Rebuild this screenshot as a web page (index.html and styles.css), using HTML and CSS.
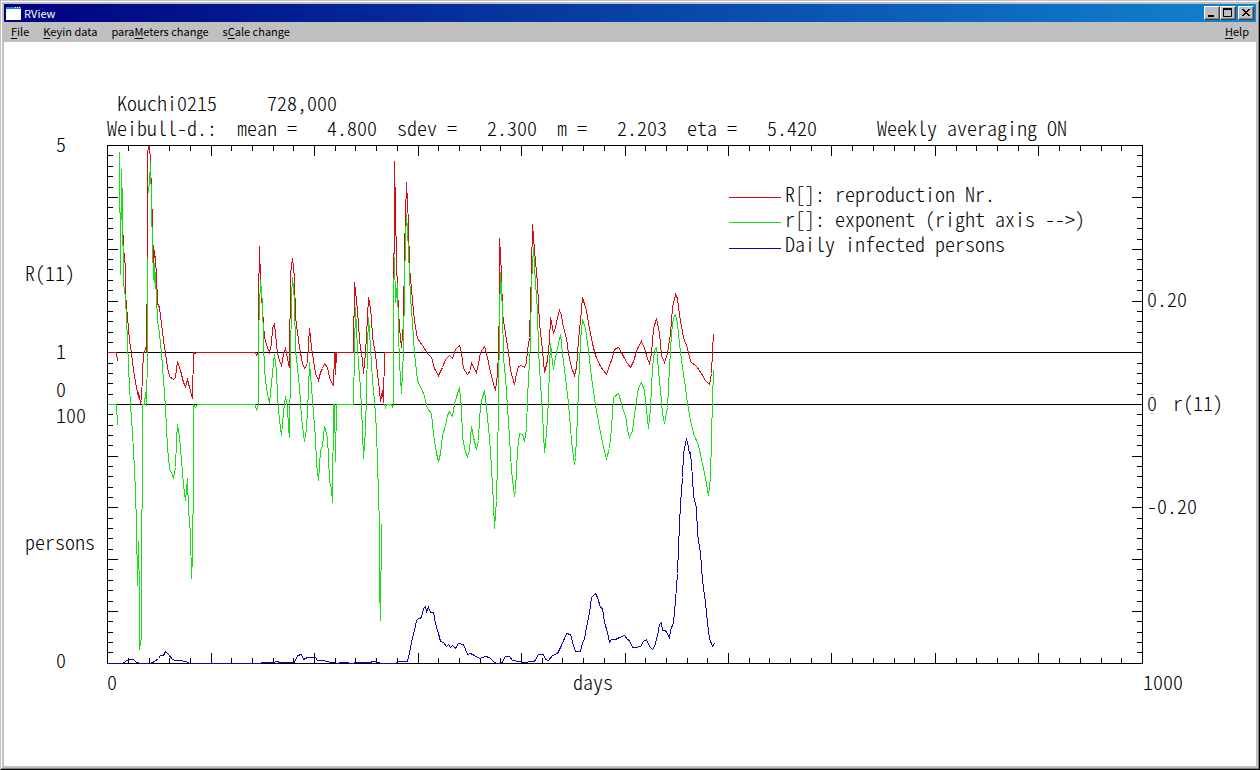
FILE: index.html
```html
<!DOCTYPE html>
<html lang="en">
<head>
<meta charset="utf-8">
<title>RView</title>
<link rel="stylesheet" href="styles.css">
</head>
<body>
<div class="window">
<div class="frame">
  <header class="titlebar">
    <svg class="app-icon" width="15" height="13" viewBox="0 0 15 13" aria-hidden="true">
      <rect width="15" height="13" fill="#fff"/>
      <rect width="15" height="2" fill="#1084d0"/>
      <path d="M9 .5h1M11 .5h1M13 .5h1" stroke="#fff"/>
    </svg>
    <h1 class="title">RView</h1>
    <div class="controls">
      <button class="control" type="button" aria-label="Minimize"><svg width="12" height="10" viewBox="0 0 12 10"><path d="M2 8h6" stroke="#000" stroke-width="2"/></svg></button>
      <button class="control" type="button" aria-label="Maximize"><svg width="12" height="10" viewBox="0 0 12 10"><path d="M1.500 1v7.500h8V1" fill="none" stroke="#000"/><path d="M1 1h9" stroke="#000" stroke-width="2"/></svg></button>
      <button class="control control-close" type="button" aria-label="Close"><svg width="12" height="10" viewBox="0 0 12 10"><path d="M2 1h2v1h1v1h2V2h1V1h2v1H9v1H8v1H7v1h1v1h1v1h1v1H8V7H7V6H5v1H4v1H2V7h1V6h1V5h1V4H4V3H3V2H2z"/></svg></button>
    </div>
  </header>
  <nav class="menubar">
    <button class="menu" type="button"><u>F</u>ile</button>
    <button class="menu" type="button"><u>K</u>eyin data</button>
    <button class="menu" type="button">para<u>M</u>eters change</button>
    <button class="menu" type="button">s<u>C</u>ale change</button>
    <button class="menu menu-help" type="button"><u>H</u>elp</button>
  </nav>
  <main class="canvas">
    <svg class="chart" viewBox="4 42 1252 724" role="img" aria-label="Reproduction number, exponent and daily infected persons">
      <defs>
        <path id="xticks" d="M128 146v4M149 146v4M169 146v4M190 146v4M211 146v9M231 146v4M252 146v4M273 146v4M293 146v4M314 146v9M335 146v4M355 146v4M376 146v4M397 146v4M418 146v9M438 146v4M459 146v4M480 146v4M500 146v4M521 146v9M542 146v4M562 146v4M583 146v4M604 146v4M625 146v9M645 146v4M666 146v4M687 146v4M707 146v4M728 146v9M749 146v4M769 146v4M790 146v4M811 146v4M831 146v9M852 146v4M873 146v4M894 146v4M914 146v4M935 146v9M956 146v4M976 146v4M997 146v4M1018 146v4M1038 146v9M1059 146v4M1080 146v4M1101 146v4M1121 146v4"/>
        <path id="yticks" d="M108 155h4M108 166h4M108 176h4M108 187h4M108 197h9M108 207h4M108 218h4M108 228h4M108 239h4M108 249h9M108 259h4M108 269h4M108 280h4M108 290h4M108 301h9M108 311h4M108 321h4M108 332h4M108 342h4M108 352h9M108 363h4M108 373h4M108 383h4M108 394h4M108 404h9M108 414h4M108 425h4M108 435h4M108 445h4M108 456h9M108 466h4M108 476h4M108 487h4M108 497h4M108 507h9M108 518h4M108 528h4M108 538h4M108 549h4M108 559h9M108 569h4M108 580h4M108 590h4M108 601h4M108 611h9M108 621h4M108 632h4M108 642h4M108 652h4"/>
      </defs>

      <g class="axes" transform="translate(.5 .5)">
        <use href="#xticks"/>
        <use href="#xticks" transform="translate(0 808) scale(1 -1)"/>
        <use href="#yticks"/>
        <use href="#yticks" transform="translate(1249 0) scale(-1 1)"/>
        <path d="M107 145H1142V663H107zM107 352H1142M107 404H1142"/>
      </g>

      <g class="series" transform="translate(.5 .5)">
        <path class="reproduction" d="M107 352H116L117 361M121 212L122 221 123 247 125 267 125 293 127 317 129 340 131 353 133 370 136 387 138 397 138 392 140 402 141 400 142 373 143 352 144 352 145 347 146 352 147 257 147 153 148 146H149L150 160 151 193 152 223 153 265 154 250 156 273 157 303 159 307 161 323 163 340 165 353 167 367 169 376 173 379 175 377 177 361 180 370 183 382 185 386 187 379 189 387 192 398 193 352 195 353 196 352 255 352 256 355 258 352 258 300 259 246 260 280 262 310 264 337 267 347 269 352 271 343 272 328 274 323 275 333 277 353 279 360 281 365 283 354 285 348 286 353 288 363 289 367 290 273 292 258 294 277 295 317 297 332 299 347 302 363 304 368 307 363 308 343 309 328 311 347 313 360 315 373 318 380 320 372 322 368 324 363 327 367 329 377 331 382 333 385 334 353 335 352 335 374 336 352 353 352 354 282 356 300 358 323 359 340 362 360 363 373 365 353 367 317 368 297 369 302 371 317 372 337 375 353 377 373 379 390 380 401 382 390 383 402 384 352 393 352 394 161 395 210 396 260 397 290 399 327 401 347 403 323 404 250 405 217 406 182 408 223 409 267 412 300 414 320 417 338 422 345 427 353 431 357 434 368 438 375 442 367 445 359 449 355 452 358 455 349 459 345 461 352 463 368 467 374 470 370 471 362 473 367 476 372 478 363 480 352 484 346 487 357 489 367 492 380 495 390 497 373 498 353 499 300 499 238 501 273 502 313 505 333 508 352 510 370 514 384 516 373 518 366 521 365 524 367 526 362 527 350 529 337 531 270 532 224 534 250 537 283 539 323 542 350 544 372 547 360 549 340 550 317 552 327 553 333 555 327 557 317 559 310 561 315 563 327 566 338 568 353 571 367 574 375 576 367 578 340 580 320 582 297 586 310 589 328 592 343 595 355 600 366 606 374 609 365 612 357 614 349 618 347 621 352 624 358 627 363 630 367 633 361 637 348 641 341 644 348 647 358 649 363 651 353 653 328 656 318 659 333 661 355 664 362 667 353 670 333 672 307 675 294 677 298 679 315 683 337 687 348 690 361 696 366 701 373 705 380 709 384 711 373 712 350 713 334"/>
        <path class="exponent" d="M107 404H116L117 425M119 151V212H120L120 274 121 169 122 204 123 283 125 297 127 340 128 367 130 404 132 433 134 468 135 493 136 523 137 585 138 541 139 597 139 649 141 637 141 510 142 507 142 404 144 404 145 392 146 405 147 353 147 257M148 193L150 165 150 162 152 247 153 277 154 282 154 263 156 297 157 320 159 333 161 353 163 380 165 407 167 447 169 468 173 477 175 467 176 440 177 424 179 437 181 460 183 485 185 500 187 478 188 510 190 533 191 578 192 557 193 473 193 404 195 407 197 404 255 404 256 410 258 404 258 333 260 280 262 303 263 340 264 370 266 388 269 403 271 383 273 362 274 354 276 370 277 397 279 420 281 435 283 412 285 396 287 407 288 427 289 437 290 363 291 297 292 277 294 300 295 350 297 367 299 387 301 417 304 441 306 428 308 390 309 362 311 387 313 413 315 437 316 463 318 480 320 450 322 445 324 426 327 437 328 457 329 480 331 488 332 502 333 404 334 404 335 461 336 404 353 404 354 350 355 307 356 330 358 363 360 387 362 430 363 458 365 430 366 393 367 347 368 317 370 347 372 380 374 400 376 430 377 463 378 493 379 527 379 585 380 620 381 524M384 404L385 407 386 404 391 404 392 406 393 404 393 300 394 257 395 302 397 283 398 330 399 363 401 393 403 350 404 283 405 240 406 213 408 250 410 297 412 323 414 353 417 380 423 393 427 408 431 413 433 433 436 453 438 461 440 453 442 435 445 425 447 415 449 411 452 416 454 403 459 387 461 408 462 437 465 452 467 456 469 450 471 426 473 437 476 449 478 440 479 417 481 400 484 390 486 407 487 417 489 437 491 467 493 503 494 528 496 500 497 460 498 405 499 317 500 272 502 310 503 357 505 377 507 407 509 437 511 470 514 496 515 490 517 450 519 433 522 434 524 441 526 428 527 397 530 343 531 283 533 247 535 283 537 310 538 350 540 383 542 413 544 452 546 433 548 400 549 367 550 343 552 362 553 369 555 357 558 343 560 334 562 353 565 377 568 403 571 440 574 464 575 457 577 417 578 387 580 340 582 319 585 328 588 350 591 377 595 405 599 427 603 447 606 458 609 448 611 427 613 397 618 393 621 403 626 420 627 430 629 437 632 430 635 407 638 387 641 382 644 390 646 410 648 428 650 407 652 367 654 350 656 347 658 370 660 390 662 413 664 423 667 407 669 367 671 333 673 317 675 314 677 323 679 343 682 367 685 387 687 403 690 420 693 433 698 445 703 468 705 478 708 495 710 477 711 437 712 400 713 370"/>
        <path class="infected" d="M107 663H122L125 661 128 659 133 659 136 662 140 663 150 663 154 661 158 658 160 655 163 655 165 651 168 654 172 659 175 660 180 660 185 661 190 663 260 663 262 662 273 662 276 661 280 662 294 662 297 655 301 654 303 659 307 657 315 657 317 660 323 660 330 662 338 663 340 662 347 662 349 663 358 662 368 662 374 661 378 662 380 663 396 663 397 661 407 661 408 657 410 647 412 637 414 630 416 620 418 618 419 618 421 617 423 608 425 606 426 611 428 607 430 612 433 612 435 623 438 633 440 641 443 642 446 646 448 644 450 647 452 645 455 648 458 643 463 644 467 654 470 653 474 655 479 658 485 656 489 657 493 661 496 663 501 663 505 656 509 656 512 660 518 661 525 662 530 661 534 661 538 654 543 654 545 659 548 660 552 655 557 653 561 645 566 633 570 634 573 645 575 651 580 651 582 643 584 638 587 622 589 612 591 597 593 595 595 593 597 597 600 607 602 608 604 622 607 632 609 642 611 639 615 639 619 637 624 635 627 639 629 640 632 647 635 647 640 646 643 641 646 639 649 646 652 649 654 646 657 635 659 624 661 622 662 630 665 630 669 637 670 630 673 622 675 600 677 573 678 547 680 503 682 477 683 453 686 438 688 447 689 453 690 452 692 477 693 495 696 508 697 533 700 553 702 580 705 602 707 622 709 638 712 646 714 643"/>
        <path class="reproduction" d="M728 197H780"/>
        <path class="exponent" d="M728 222H780"/>
        <path class="infected" d="M728 248H780"/>
      </g>

      <g class="labels">
        <text x="117" y="111">Kouchi0215     728,000</text>
        <text x="107" y="136">Weibull-d.:  mean =   4.800  sdev =   2.300  m =   2.203  eta =   5.420      Weekly averaging ON</text>
        <text x="785" y="202">R[]: reproduction Nr.</text>
        <text x="785" y="227">r[]: exponent (right axis --&gt;)</text>
        <text x="785" y="252">Daily infected persons</text>
        <text x="56" y="152">5</text>
        <text x="25" y="281">R(11)</text>
        <text x="56" y="359">1</text>
        <text x="56" y="397">0</text>
        <text x="56" y="423">100</text>
        <text x="25" y="550">persons</text>
        <text x="56" y="668">0</text>
        <text x="107" y="690">0</text>
        <text x="573" y="690">days</text>
        <text x="1143" y="690">1000</text>
        <text x="1147" y="307">0.20</text>
        <text x="1147" y="411">0</text>
        <text x="1173" y="411">r(11)</text>
        <text x="1147" y="514">-0.20</text>
      </g>
    </svg>
  </main>
</div>
</div>
</body>
</html>
```
FILE: styles.css
```css
* { box-sizing: border-box; }

body {
  margin: 0;
  background: #c0c0c0;
  color: #000;
  font: 11px/18px "Noto Sans CJK JP", "Liberation Sans", sans-serif;
}

.window {
  min-height: 100vh;
  display: flex;
  border: 1px solid;
  border-color: #c0c0c0 #000 #000 #c0c0c0;
}

.frame {
  flex: 1;
  min-width: 0;
  display: flex;
  flex-direction: column;
  padding: 2px;
  border: 1px solid;
  border-color: #fff #808080 #808080 #fff;
}

.titlebar {
  height: 18px;
  display: flex;
  align-items: center;
  gap: 3px;
  padding: 0 2px;
  background: linear-gradient(90deg, #000080, #1084d0);
  color: #fff;
}

.app-icon { display: block; }

.title {
  margin: 0;
  font-size: 11px;
  font-weight: 400;
}

.controls {
  display: flex;
  margin-left: auto;
}

.control {
  width: 16px;
  height: 14px;
  display: flex;
  align-items: center;
  justify-content: center;
  padding: 0;
  border: 1px solid;
  border-color: #fff #404040 #404040 #fff;
  box-shadow: inset -1px -1px #808080;
  background: #c0c0c0;
}

.control svg { display: block; flex: none; }

.control-close { margin-left: 2px; }

.menubar {
  height: 20px;
  display: flex;
  align-items: flex-start;
  background: #c0c0c0;
}

.menu {
  padding: 0 7px;
  border: 0;
  background: none;
  color: inherit;
  font: inherit;
}

.menu-help { margin-left: auto; }

.menu u { text-underline-offset: 2px; }

.canvas {
  flex: 1;
  background: #fff;
}

.chart {
  display: block;
  width: 100%;
  height: auto;
}

.axes,
.series {
  fill: none;
  stroke-width: 1;
  shape-rendering: crispEdges;
}

.axes { stroke: #000; stroke-linecap: square; }

.reproduction { stroke: #d80c14; }
.exponent { stroke: #14e014; }
.infected { stroke: #0808b8; }

.labels {
  fill: #000;
  font-family: "Noto Sans CJK JP", "Liberation Mono", monospace;
  font-size: 20px;
  font-weight: 300;
  font-feature-settings: "hwid";
}

.labels text { white-space: pre; }
```
